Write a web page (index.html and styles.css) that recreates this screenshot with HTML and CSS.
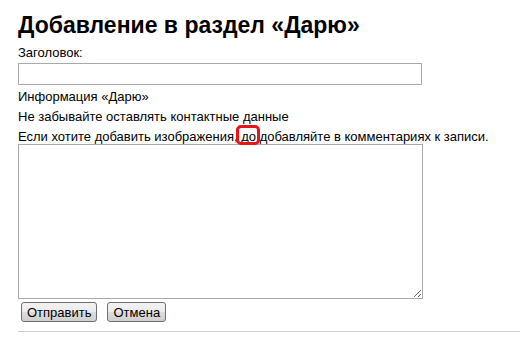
FILE: index.html
```html
<!DOCTYPE html>
<html lang="ru">
<head>
  <meta charset="UTF-8">
  <title>Добавление в раздел «Дарю»</title>
  <link rel="stylesheet" href="styles.css">
</head>
<body>
  <form class="add-form">
    <h1>Добавление в раздел «Дарю»</h1>
    <label class="label" for="title">Заголовок:</label>
    <input class="field" type="text" id="title">
    <div class="note first">Информация «Дарю»</div>
    <div class="note">Не забывайте оставлять контактные данные</div>
    <div class="note">Если хотите добавить изображения, <span class="mark">до</span> добавляйте в комментариях к записи.</div>
    <textarea class="text" id="info"></textarea>
    <div class="buttons">
      <button type="submit">Отправить</button>
      <button type="button">Отмена</button>
    </div>
  </form>
  <hr class="sep">
</body>
</html>
```

FILE: styles.css
```css
body {
    font-family: "Liberation Sans", Arial, sans-serif;
    font-size: 13px;
    color: #000;
    background: #fff;
    margin: 0;
    padding: 11px 0 0 18px;
}
.add-form {
    display: flex;
    flex-direction: column;
    align-items: flex-start;
}
h1 {
    margin: 0;
    font-size: 23px;
    line-height: 28px;
    font-weight: bold;
}
.label {
    margin-top: 6px;
    line-height: 15px;
}
.field {
    margin: 3px 0 0;
    width: 404px;
    height: 22px;
    box-sizing: border-box;
    border: 1px solid #a9a9a9;
    padding: 2px;
    font: inherit;
}
.note {
    margin-top: 5px;
    line-height: 15px;
}
.note.first {
    margin-top: 4px;
}
/* red frame drawn over the word */
.mark {
    position: relative;
}
.mark::after {
    content: '';
    position: absolute;
    left: -5px;
    right: -4px;
    top: -4px;
    bottom: -1px;
    border: 3px solid #e8141c;
    border-radius: 5px;
}
.text {
    margin: 0;
    width: 405px;
    height: 155px;
    box-sizing: border-box;
    border: 1px solid #a9a9a9;
    padding: 2px;
    font: inherit;
    resize: both;
}
.buttons {
    display: flex;
    gap: 10px;
    margin: 3px 0 0 3px;
}
.buttons button {
    font: 13px "Liberation Sans", Arial, sans-serif;
    height: 20px;
    padding: 0 5px;
    border: 1px solid #707070;
    border-radius: 3px;
    background: linear-gradient(#f2f2f2, #ebebeb 50%, #dddddd 51%, #cfcfcf);
    color: #000;
}
.sep {
    margin: 9px 0 0;
    border: 0;
    border-top: 1px solid #cfcfcf;
    height: 0;
}
```
